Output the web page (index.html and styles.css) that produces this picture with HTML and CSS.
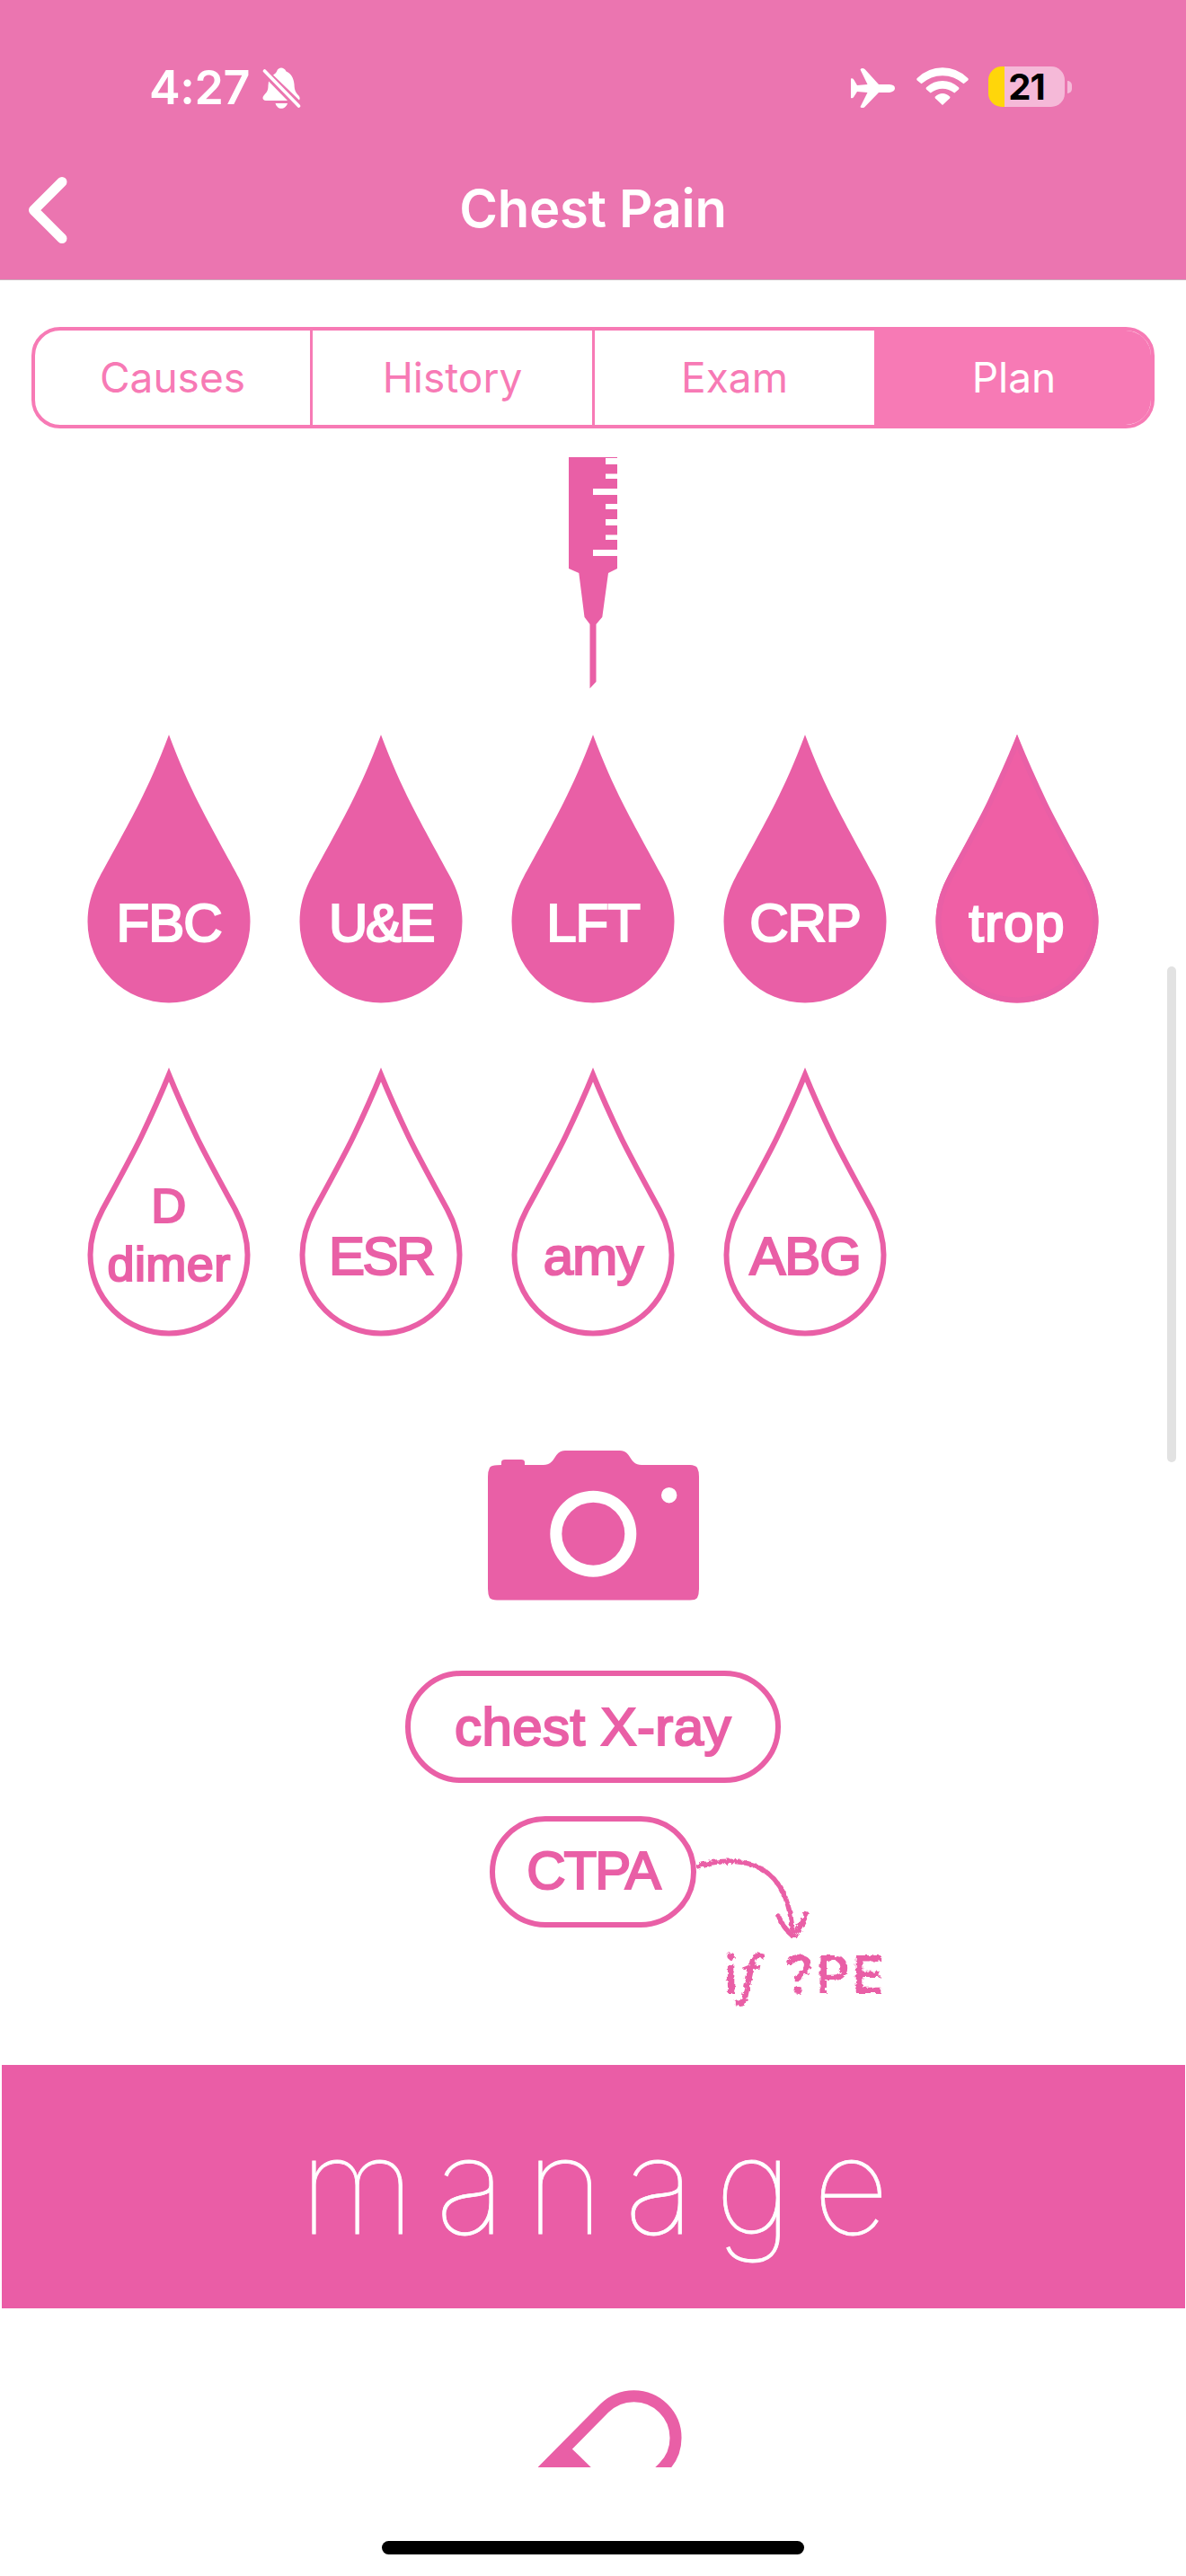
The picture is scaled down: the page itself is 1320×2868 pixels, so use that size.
FILE: index.html
```html
<!DOCTYPE html>
<html lang="en">
<head>
<meta charset="utf-8">
<title>Chest Pain</title>
<link rel="stylesheet" href="styles.css">
</head>
<body>
<svg class="defs" width="0" height="0" aria-hidden="true">
  <defs>
    <filter id="crayon" x="-10%" y="-10%" width="120%" height="120%">
      <feTurbulence type="fractalNoise" baseFrequency="0.22" numOctaves="2" seed="4" result="n"/>
      <feDisplacementMap in="SourceGraphic" in2="n" scale="6"/>
    </filter>
    <symbol id="drop" viewBox="0 0 182 300">
      <path d="M91 1C103 33 113 55 124 77C136 101 160 144 168 159C176 174 181.500 190 181.500 209A90.500 90.500 0 0 1 .5 209C.5 190 6 174 14 159C22 144 46 101 58 77C69 55 79 33 91 1Z"/>
    </symbol>
    <symbol id="drop-line" viewBox="0 0 182 300">
      <path d="M91 8.500C101 33 111 55 121.500 77C133 101 157 144 165 159C173 174 178.500 190 178.500 209A87.500 87.500 0 0 1 3.500 209C3.500 190 9 174 17 159C25 144 49 101 60.500 77C71 55 81 33 91 8.500Z" fill="none" stroke="currentColor" stroke-width="6"/>
    </symbol>
  </defs>
</svg>

<header class="header">
  <div class="status">
    <div class="status-left">
      <span class="time">4:27</span>
      <svg class="bell" viewBox="0 0 43 46" width="43" height="46">
        <path fill="#fff" d="M12 8.500C14 7 15 6.500 16 4.500C17 1.500 19 .5 21 .5S25 1.500 26.500 4.500C32 7 35 12 35.500 19C35.800 26 37 28 40.500 31.500C42 33.500 42 35 41 36.500Z"/>
        <path fill="#fff" d="M7 15.500L28 37H4C.5 37 -.5 34 1.500 31.500C5 27.500 6.500 26 6.500 20Z"/>
        <path fill="#fff" d="M14.500 40H28C27 43.500 24 45.800 21 45.800S15.500 43.500 14.500 40Z"/>
        <path fill="none" stroke="#fff" stroke-width="3.600" stroke-linecap="round" d="M2.500 4L40.500 43"/>
      </svg>
    </div>
    <div class="status-right">
      <svg class="plane" viewBox="0 0 49 44" width="49" height="44">
        <path fill="#fff" d="M0 11.500Q2.500 10.500 3.500 13L7 19L18.500 18L10.500 1.500Q10.500 0 13 0Q15 0 16 1.500L31 18H43Q49 18.500 49 22.200T43 27H31L16 42.500Q15 44 13 44Q10.500 44 10.500 43L18.500 27L7 26L3.500 31.500Q2.500 34 0 33Z"/>
      </svg>
      <svg class="wifi" viewBox="0 0 58 42" width="58" height="42">
        <path fill="#fff" d="M.8 14.500Q-.3 13.200 .8 12Q13 .3 29 .3T57.200 12Q58.300 13.200 57.200 14.500L52.500 18.300Q42 9.200 29 9.200T5.500 18.300Z"/>
        <path fill="#fff" d="M11 24.500Q10 23.300 11 22.300Q19 15 29 15T47 22.300Q48 23.300 47 24.500L42.300 28.500Q36 23.800 29 23.800T15.700 28.500Z"/>
        <path fill="#fff" d="M21 34.500Q20 33.500 21 32.500Q24.500 29 29 29T37 32.500Q38 33.500 37 34.500L29 42Z"/>
      </svg>
      <div class="battery"><div class="cell"><span>21</span></div><i class="nub"></i></div>
    </div>
  </div>
  <div class="navbar">
    <svg class="back" viewBox="0 0 44 74" width="44" height="74">
      <path d="M38 5.500L6.500 37L38 68.500" fill="none" stroke="#fff" stroke-width="11" stroke-linecap="round" stroke-linejoin="round"/>
    </svg>
    <h1>Chest Pain</h1>
  </div>
</header>

<nav class="tabs">
  <a>Causes</a><a>History</a><a>Exam</a><a class="on">Plan</a>
</nav>

<main class="plan">
  <svg class="syringe" viewBox="0 0 54 258" width="54" height="258">
    <path fill="currentColor" d="M0 0H54V1H41V8H54V18.500H41V24H54V35H27V42H54V52H41V58H54V69H41V76H54V86.500H41V92H54V103H27V110H54V124L44 129L37.300 178L30.500 186V250L23.500 257.500V186L17.500 178L11.300 129L0 124Z"/>
  </svg>

  <section class="drops">
    <div class="drop full"><svg><use href="#drop"/></svg><span>FBC</span></div>
    <div class="drop full"><svg><use href="#drop"/></svg><span class="tight">U&amp;E</span></div>
    <div class="drop full"><svg><use href="#drop"/></svg><span>LFT</span></div>
    <div class="drop full"><svg><use href="#drop"/></svg><span>CRP</span></div>
    <div class="drop full trop"><svg><use href="#drop"/><use class="edge" href="#drop-line"/></svg><span class="loose">trop</span></div>
    <div class="drop"><svg><use href="#drop-line"/></svg><span class="two">D<br>dimer</span></div>
    <div class="drop"><svg><use href="#drop-line"/></svg><span class="tight">ESR</span></div>
    <div class="drop"><svg><use href="#drop-line"/></svg><span>amy</span></div>
    <div class="drop"><svg><use href="#drop-line"/></svg><span>ABG</span></div>
  </section>

  <svg class="camera" viewBox="0 0 235 168" width="235" height="168">
    <path fill="currentColor" fill-rule="evenodd" d="M10 17.200L15 17V14Q15 11 19 11H37Q41 11 41 14V17H62C76 17 73 1 86 1H147C160 1 157 17 171 17H225Q231 17.300 233 20Q235 24 235 30V155Q235 161 233 165Q231 167.500 225 167.500H10Q4 167.300 2 165Q0 161 0 155V30Q0 24 2 20Q4 17.300 10 17.200ZM117.300 45.700A48 48 0 1 0 117.300 141.700A48 48 0 1 0 117.300 45.700ZM201.700 42A8.700 8.700 0 1 0 201.700 59.400A8.700 8.700 0 1 0 201.700 42Z"/>
    <circle cx="117.300" cy="93.700" r="35" fill="currentColor"/>
  </svg>

  <div class="pill xray">chest X-ray</div>
  <div class="ctpa-row">
    <div class="pill ctpa">CTPA</div>
    <div class="note">
      <svg viewBox="0 0 130 92" width="130" height="92">
        <g fill="none" stroke="currentColor" stroke-width="5.500" stroke-linecap="round" stroke-linejoin="round">
          <path d="M1 13C16 8 40 4 62 11C88 20 103 42 107 84"/>
          <path d="M91 68Q98 83 108 91Q115 82 123 66"/>
        </g>
      </svg>
      <span>i<em>f</em> ?PE</span>
    </div>
  </div>

  <h2 class="band">manage</h2>

  <svg class="capsule" viewBox="0 0 164 86" width="164" height="86">
    <path fill="none" stroke="currentColor" stroke-width="13" d="M-10 105L73.600 20.300A46.500 46.500 0 1 1 139.400 86.100L120 105.500"/>
    <path fill="currentColor" d="M34 62L44.500 72L72 99H0Z"/>
  </svg>
</main>

<footer class="home"><div class="bar"></div></footer>
<div class="scroll-thumb"></div>
</body>
</html>
```
FILE: styles.css
```css
* { box-sizing: border-box; }

body {
  margin: 0;
  position: relative;
  width: 1320px;
  height: 2868px;
  overflow: hidden;
  display: flex;
  flex-direction: column;
  background: #fff;
  color: #e95fa6;
  font-family: "Inter", "Liberation Sans", sans-serif;
}

svg { display: block; flex: none; }
.defs { position: absolute; }

/* Header */
.header {
  height: 312px;
  flex: none;
  background: #eb75b0;
  border-bottom: 1px solid #c9b0bd;
  color: #fff;
}
.status {
  height: 156px;
  padding: 74px 127px 0 166px;
  display: flex;
  justify-content: space-between;
  align-items: flex-start;
}
.status-left, .status-right { display: flex; align-items: flex-start; }
.time {
  width: 126px;
  font-size: 52px;
  line-height: 48px;
  font-weight: 600;
  letter-spacing: -0.4px;
}
.bell { margin-top: 1px; }
.plane { margin: 2px 24px 0 0; }
.wifi { margin: 1px 22px 0 0; }
.battery { display: flex; align-items: center; gap: 3px; }
.cell {
  width: 85px;
  height: 45px;
  border-radius: 15px;
  background: linear-gradient(90deg, #ffd60a 18px, #f5b9d8 18px);
  color: #000;
  font-size: 40px;
  line-height: 45px;
  font-weight: 700;
  text-align: center;
  letter-spacing: -1px;
}
.nub { width: 5px; height: 14px; border-radius: 0 5px 5px 0; background: #f5b9d8; }

.navbar {
  height: 155px;
  padding: 0 31px;
  display: grid;
  grid-template-columns: 44px 1fr 44px;
  align-items: center;
}
h1 {
  margin: 0;
  padding-bottom: 4px;
  text-align: center;
  font-size: 58px;
  line-height: 70px;
  font-weight: 600;
  letter-spacing: -0.3px;
}

/* Segmented control */
.tabs {
  flex: none;
  height: 113px;
  margin: 52px 35px 32px;
  display: grid;
  grid-template-columns: 306px 314px 314px 1fr;
  border: 4px solid #f77ab5;
  border-radius: 32px;
  overflow: hidden;
}
.tabs a {
  text-align: center;
  font-size: 46px;
  line-height: 105px;
  color: #f77ab5;
  border-left: 3px solid #f77ab5;
}
.tabs a:first-child { border-left: 0; }
.tabs .on { background: #f77ab5; color: #fff; }

/* Scrolling content */
.plan {
  flex: none;
  height: 2239px;
  overflow: hidden;
  display: flex;
  flex-direction: column;
  align-items: center;
  font-family: "Liberation Sans", Arial, sans-serif;
}
.drops {
  margin-top: 50px;
  display: grid;
  grid-template-columns: repeat(5, 182px);
  gap: 71px 54px;
}
.drop { display: grid; height: 300px; justify-items: center; }
.drop > * { grid-area: 1 / 1; }
.drop svg { width: 182px; height: 300px; fill: #e95fa6; }
.drop span {
  padding-top: 181px;
  font-size: 60px;
  line-height: 60px;
  letter-spacing: -1px;
  text-align: center;
  white-space: nowrap;
  -webkit-text-stroke: 2.2px currentColor;
}
.drop .tight { letter-spacing: -2.5px; }
.drop .loose { letter-spacing: 1px; }
.drop .two { padding-top: 122px; font-size: 54px; line-height: 65px; letter-spacing: 0.4px; }
.full span { color: #fff; }
.trop svg { fill: #ef5fa5; }
.trop .edge { color: #e95fa6; }

.camera { margin-top: 126px; }

.pill {
  height: 125px;
  border: 6px solid #e95fa6;
  border-radius: 63px;
  font-size: 60px;
  line-height: 113px;
  text-align: center;
  white-space: nowrap;
  -webkit-text-stroke: 2.2px currentColor;
}
.xray { margin-top: 78px; width: 418px; letter-spacing: 0.4px; }
.ctpa-row {
  margin-top: 37px;
  height: 277px;
  width: 100%;
  flex: none;
  display: grid;
  grid-template-columns: 1fr 230px 1fr;
}
.ctpa { grid-column: 2; height: 124px; line-height: 110px; letter-spacing: -2px; }
.note { padding-top: 43px; filter: url(#crayon); }
.note span {
  display: block;
  padding-left: 31px;
  font: 600 58px/80px "Inter", sans-serif;
  letter-spacing: 3px;
  word-spacing: 9px;
  white-space: nowrap;
}
.note em { font-family: "Open Sans", sans-serif; }

.band {
  flex: none;
  width: 1317px;
  height: 271px;
  margin: 0;
  padding-left: 26px;
  background: #ea5da6;
  color: #fff;
  font-family: "Inter", sans-serif;
  font-size: 148px;
  line-height: 270px;
  font-weight: 100;
  letter-spacing: 23px;
  text-align: center;
  -webkit-text-stroke: 0.8px currentColor;
}
.capsule { margin: 91px 0 0 41px; }

/* Home indicator and scroll position */
.home { height: 120px; padding-top: 81px; display: flex; justify-content: center; }
.bar { width: 470px; height: 15px; border-radius: 8px; background: #000; }
.scroll-thumb {
  position: absolute;
  top: 1076px;
  right: 11px;
  width: 10px;
  height: 552px;
  border-radius: 5px;
  background: #e2e2e2;
}
```
